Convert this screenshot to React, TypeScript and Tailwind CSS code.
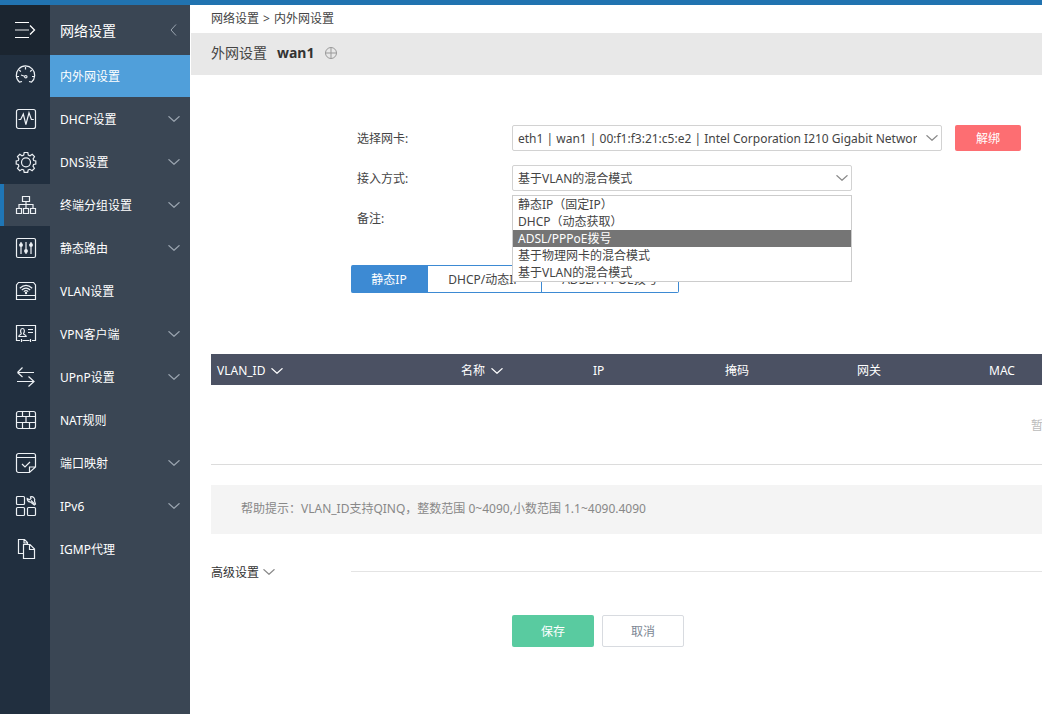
import { useState, type ReactNode } from 'react'
import clsx from 'clsx'

const ACCESS_MODES = [
    '静态IP（固定IP）',
    'DHCP（动态获取）',
    'ADSL/PPPoE拨号',
    '基于物理网卡的混合模式',
    '基于VLAN的混合模式',
]

const TABS = [
    { label: '静态IP', width: 'w-[77px]' },
    { label: 'DHCP/动态IP', width: 'w-[114px]' },
    { label: 'ADSL/PPPOE拨号', width: 'w-[137px]' },
]

const MENU = [
    { label: '内外网设置', expandable: false },
    { label: 'DHCP设置', expandable: true },
    { label: 'DNS设置', expandable: true },
    { label: '终端分组设置', expandable: true },
    { label: '静态路由', expandable: true },
    { label: 'VLAN设置', expandable: false },
    { label: 'VPN客户端', expandable: true },
    { label: 'UPnP设置', expandable: true },
    { label: 'NAT规则', expandable: false },
    { label: '端口映射', expandable: true },
    { label: 'IPv6', expandable: true },
    { label: 'IGMP代理', expandable: false },
]

const COLUMNS = [
    { label: 'VLAN_ID', sortable: true },
    { label: '名称', sortable: true },
    { label: 'IP', sortable: false },
    { label: '掩码', sortable: false },
    { label: '网关', sortable: false },
    { label: 'MAC', sortable: false },
]

const NAV_ICONS: { name: string; shape: ReactNode }[] = [
    {
        name: '系统概况',
        shape: (
            <>
                <path d="M6 15.5 L3.6 16.2 A9.2 9.2 0 1 1 15.4 16.2 L13 15.5" />
                <path d="M9.5 1v2.5M3.2 4l1.6 1.6M15.8 4l-1.600 1.6M.5 10.5H3M16 10.5h2.500M5 9l3.500 1.2" />
                <circle cx="9.8" cy="10.7" r="1.2" />
            </>
        ),
    },
    {
        name: '状态监控',
        shape: (
            <>
                <rect x=".5" y=".5" width="19" height="19" rx="2" />
                <path d="M2.5 10.5h2.2L7.3 5l2.6 10.5L13 3.8l2.4 6.7h2.4" />
            </>
        ),
    },
    {
        name: '系统设置',
        shape: (
            <>
                <path d="M8.2.5h3.6l.5 2.600 1.700.7 2.200-1.500 2.300 2.400-1.400 2.200.6 1.600 2.100.5v3l-2.200.5-.6 1.600 1.400 2.200-2.300 2.400-2.200-1.400-1.700.7-.5 2.300H8.200l-.5-2.300-1.700-.7-2.200 1.400-2.300-2.400 1.400-2.200-.6-1.600-2.100-.5v-3l2.100-.5.6-1.600-1.400-2.200 2.300-2.400L6 3.800l1.700-.7z" />
                <circle cx="10" cy="10.3" r="4.5" />
            </>
        ),
    },
    {
        name: '网络设置',
        shape: (
            <path d="M6.500 1.500h7v5h-7zM10 6.500V13M3 13V9.500h14V13M.5 13.500h5v5h-5zM7.500 13.500h5v5h-5zM14.500 13.500h5v5h-5z" />
        ),
    },
    {
        name: '流控分流',
        shape: (
            <>
                <rect x=".5" y=".5" width="19" height="19" rx="1.5" />
                <path d="M5 4v2M5 8.500V16M10 4v7.500M10 14v2M15 4v2M15 8.500V16" />
                <circle cx="5" cy="7" r="1.300" fill="currentColor" />
                <circle cx="10" cy="13" r="1.300" fill="currentColor" />
                <circle cx="15" cy="7" r="1.300" fill="currentColor" />
            </>
        ),
    },
    {
        name: '无线管理',
        shape: (
            <>
                <path d="M2.500 1.500h15l2 2.500v14.500H.5V4zM.5 14.500h19" />
                <path d="M3.800 7.300q6.200-6 12.400 0M5.800 9q4.200-3.800 8.400 0M7.800 10.600q2.200-1.900 4.400 0" />
                <circle cx="10" cy="12" r=".6" fill="currentColor" />
            </>
        ),
    },
    {
        name: '认证计费',
        shape: (
            <>
                <path d="M4 16.500H.5v-15h19v15H16M6.500 16.500h7M5.500 15v3M14.500 15v3M12 5.500h5M12 8.500h5" />
                <path d="M2.800 12.500c0-2 2.500-1.500 2.500-3C4 7.500 4.500 4.500 6.500 4.500s2.500 3 1 5c0 1.500 2.700 1 2.700 3z" />
            </>
        ),
    },
    {
        name: '高级应用',
        shape: (
            <path d="M18 5.500H1.500M6.500.5l-5 5M6.500 10l-5-4.500M1 14.500h17M12.500 9.500l5.500 5-5.500 5" />
        ),
    },
    {
        name: '安全设置',
        shape: (
            <>
                <rect x=".5" y="1.500" width="19" height="17" rx="2" />
                <path d="M.5 6.500h19M.5 12.500h19M6.500 1.500v5M13.500 1.500v5M10 6.500v6M6.500 12.500v6M13.500 12.500v6" />
            </>
        ),
    },
    {
        name: '行为管控',
        shape: (
            <path d="M13.500 19.500H2.500a2 2 0 0 1-2-2v-15a2 2 0 0 1 2-2h15a2 2 0 0 1 2 2V14zV14h6M.5 4.500h19M6 11l3 3 5-5" />
        ),
    },
    {
        name: '系统工具',
        shape: (
            <>
                <rect x=".5" y=".5" width="8" height="8" rx="1" />
                <rect x=".5" y="11.500" width="8" height="8" rx="1" />
                <rect x="11.500" y="11.500" width="8" height="8" rx="1" />
                <path d="M14.500.8a3.200 3.200 0 0 1 4 4.200l1 3-1.200 1-3.800-3a3.200 3.200 0 0 1-3.300-3.500l2.300 1.200 1.500-1.200z" />
                <path d="M15 4.500l3.500 3.500" />
            </>
        ),
    },
    {
        name: '日志中心',
        shape: (
            <path d="M8 14.500H2.500V.5h6l3 3V6M8 .5V4h3.500M7.500 5.500h6.500l4.500 4.500v9.500h-11zM13.500 5.500v5h5" />
        ),
    },
]

const Chevron = ({ className }: { className?: string }) => (
    <svg
        className={clsx('h-1.5 w-3 shrink-0', className)}
        viewBox="0 0 12 6"
        fill="none"
        stroke="currentColor"
        strokeWidth="1.2"
        aria-hidden
    >
        <path d="M.5.3 6 5.300 11.500.3" />
    </svg>
)

const IconRail = () => (
    <nav aria-label="主菜单" className="w-[50px] shrink-0 bg-[#212f3f]">
        <button
            aria-label="展开菜单"
            className="flex h-[50px] w-full items-center bg-[#1b2530] pl-3.5 text-white"
        >
            <svg
                className="h-5 w-[22px]"
                viewBox="0 0 22 20"
                fill="none"
                stroke="currentColor"
            >
                <path d="M1 2.500h14M1 17.500h14" />
                <path d="M1 10h14" strokeWidth="1.500" opacity=".6" />
                <path d="M16 5.500l4.500 4.500-4.500 4.500" strokeWidth="1.300" />
            </svg>
        </button>
        <ul className="flex flex-col gap-px">
            {NAV_ICONS.map(({ name, shape }) => (
                <li key={name}>
                    <a
                        href="#"
                        aria-label={name}
                        className={clsx(
                            'flex h-[42px] items-center border-l-4 pl-3 text-[#edf1f5]',
                            name === '网络设置'
                                ? 'border-[#1f76b6] bg-[#3a4654]'
                                : 'border-transparent',
                        )}
                    >
                        <svg
                            className="size-5"
                            viewBox="0 0 20 20"
                            fill="none"
                            stroke="currentColor"
                            strokeWidth="1.2"
                            overflow="visible"
                        >
                            {shape}
                        </svg>
                    </a>
                </li>
            ))}
        </ul>
    </nav>
)

const SideMenu = () => (
    <nav
        aria-label="网络设置"
        className="w-[140px] shrink-0 bg-[#3a4654] text-white"
    >
        <div className="flex h-[50px] items-center justify-between pr-3 pl-2.5 text-sm">
            <h2 className="pt-0.5">网络设置</h2>
            <button aria-label="收起" className="text-[#9ba5b0]">
                <svg
                    className="h-3 w-2"
                    viewBox="0 0 8 12"
                    fill="none"
                    stroke="currentColor"
                >
                    <path d="M6 .5 1 6 6 11.500" />
                </svg>
            </button>
        </div>
        <ul className="flex flex-col gap-px">
            {MENU.map((item, i) => (
                <li key={item.label}>
                    <a
                        href="#"
                        className={clsx(
                            'flex h-[42px] items-center justify-between px-2.5',
                            i === 0 && 'bg-[#509fda]',
                        )}
                    >
                        <span className="pt-0.5">{item.label}</span>
                        {item.expandable && (
                            <Chevron className="text-[#9ba5b0]" />
                        )}
                    </a>
                </li>
            ))}
        </ul>
    </nav>
)

const AccessModeList = ({
    highlighted,
    onHighlight,
}: {
    highlighted: string
    onHighlight: (mode: string) => void
}) => (
    <ul
        role="listbox"
        aria-label="接入方式"
        className="absolute top-full left-0 z-10 mt-1 w-full border border-[#ccc] bg-white"
    >
        {ACCESS_MODES.map((mode) => (
            <li
                key={mode}
                role="option"
                aria-selected={mode === highlighted}
                onMouseEnter={() => onHighlight(mode)}
                className={clsx(
                    'h-[17px] px-[5px] leading-[17px]',
                    mode === highlighted && 'bg-[#757575] text-white',
                )}
            >
                {mode}
            </li>
        ))}
    </ul>
)

const labelStyle = 'w-[155px] shrink-0 pt-0.5'
const selectStyle =
    'h-[26px] w-full appearance-none rounded-xs border border-[#d2d2d2] bg-white pt-0.5 pr-6 pl-[5px] outline-none'

const WanForm = () => {
    const [highlighted, setHighlighted] = useState('ADSL/PPPoE拨号')

    return (
        <form className="flex flex-col gap-3.5 pl-[146px]">
            <div className="flex h-[26px] items-center">
                <label htmlFor="nic" className={labelStyle}>
                    选择网卡:
                </label>
                <div className="relative w-[430px]">
                    <select id="nic" className={selectStyle}>
                        <option>
                            eth1 | wan1 | 00:f1:f3:21:c5:e2 | Intel Corporation
                            I210 Gigabit Network Connection
                        </option>
                    </select>
                    <Chevron className="pointer-events-none absolute top-2.5 right-1 text-[#888]" />
                </div>
                <button
                    type="button"
                    className="ml-[13px] h-[26px] w-[66px] shrink-0 rounded-xs bg-[#fd6e72] pt-0.5 text-white"
                >
                    解绑
                </button>
            </div>
            <div className="flex h-[26px] items-center">
                <label htmlFor="mode" className={labelStyle}>
                    接入方式:
                </label>
                <div className="relative w-[340px]">
                    <select
                        id="mode"
                        className={selectStyle}
                        defaultValue="基于VLAN的混合模式"
                    >
                        {ACCESS_MODES.map((mode) => (
                            <option key={mode}>{mode}</option>
                        ))}
                    </select>
                    <Chevron className="pointer-events-none absolute top-2.5 right-1 text-[#888]" />
                    <AccessModeList
                        highlighted={highlighted}
                        onHighlight={setHighlighted}
                    />
                </div>
            </div>
            <div className="flex h-[26px] items-center">
                <label htmlFor="remark" className={labelStyle}>
                    备注:
                </label>
                <input
                    id="remark"
                    className="h-[26px] w-[340px] rounded-xs border border-[#d2d2d2] px-[5px]"
                />
            </div>
        </form>
    )
}

const VlanTable = () => (
    <table className="mt-[61px] w-[1700px] table-fixed text-left">
        <thead className="bg-[#4b5163] text-white">
            <tr className="h-[31px]">
                {COLUMNS.map((col, i) => (
                    <th
                        key={col.label}
                        className={clsx(
                            'px-1.5 pt-0.5 font-normal',
                            i === 0 ? 'w-[244px]' : 'w-[132px]',
                        )}
                    >
                        {col.sortable ? (
                            <button className="flex items-center gap-1.5">
                                {col.label}
                                <Chevron />
                            </button>
                        ) : (
                            col.label
                        )}
                    </th>
                ))}
                <td />
            </tr>
        </thead>
        <tbody>
            <tr className="h-[79px] border-b border-[#dcdcdc]">
                <td
                    colSpan={COLUMNS.length + 1}
                    className="pt-1 text-center text-[#bbb]"
                >
                    暂无数据！
                </td>
            </tr>
        </tbody>
    </table>
)

export default function App() {
    const [tab, setTab] = useState(0)

    return (
        <div className="flex min-h-screen flex-col border-t-[5px] border-[#2173b0] bg-white font-['Noto_Sans','Noto_Sans_CJK_SC',sans-serif] text-xs text-[#444]">
            <div className="flex flex-1">
                <IconRail />
                <SideMenu />
                <main className="ml-px min-w-0 flex-1 overflow-hidden">
                    <nav
                        aria-label="面包屑"
                        className="flex h-7 items-center gap-1 pl-5"
                    >
                        <a href="#">网络设置</a>
                        <span>&gt;</span>
                        <a href="#">内外网设置</a>
                    </nav>
                    <header className="flex h-[42px] items-center gap-2.5 bg-[#e8e8e8] pb-0.5 pl-5 text-sm">
                        <h1>外网设置</h1>
                        <strong className="text-[#333]">wan1</strong>
                        <button aria-label="添加外网" className="text-[#999]">
                            <svg
                                className="ml-px size-3"
                                viewBox="0 0 12 12"
                                fill="none"
                                stroke="currentColor"
                            >
                                <circle cx="6" cy="6" r="5.500" />
                                <path d="M6 .5v11M.5 6h11" />
                            </svg>
                        </button>
                    </header>

                    <section className="pt-[50px] pl-5">
                        <WanForm />

                        <div role="tablist" className="mt-[34px] flex pl-[140px]">
                            {TABS.map(({ label, width }, i) => (
                                <button
                                    key={label}
                                    role="tab"
                                    aria-selected={tab === i}
                                    onClick={() => setTab(i)}
                                    className={clsx(
                                        'h-7 border-y border-r border-[#3d8ad3] pt-0.5 first:rounded-l-xs last:rounded-r-xs',
                                        width,
                                        tab === i && 'bg-[#3d8ad3] text-white',
                                    )}
                                >
                                    {label}
                                </button>
                            ))}
                        </div>

                        <VlanTable />

                        <p className="mt-5 flex h-[49px] items-center bg-[#f4f4f4] pl-[30px] text-[#888]">
                            帮助提示：VLAN_ID支持QINQ，整数范围
                            0~4090,小数范围 1.1~4090.4090
                        </p>

                        <div className="mt-7 flex h-5 items-center">
                            <button className="flex w-[140px] items-center gap-1 text-[#333]">
                                <span className="pt-0.5">高级设置</span>
                                <Chevron className="w-2.5 text-[#888]" />
                            </button>
                            <hr className="flex-1 border-[#e4e4e4]" />
                        </div>

                        <div className="mt-[33px] flex gap-2 pl-[301px]">
                            <button className="h-8 w-[82px] rounded-xs bg-[#59cba0] pt-0.5 text-white">
                                保存
                            </button>
                            <button className="h-8 w-[82px] rounded-xs border border-[#d8dbe0] pt-0.5 text-[#7c8794]">
                                取消
                            </button>
                        </div>
                    </section>
                </main>
            </div>
        </div>
    )
}
